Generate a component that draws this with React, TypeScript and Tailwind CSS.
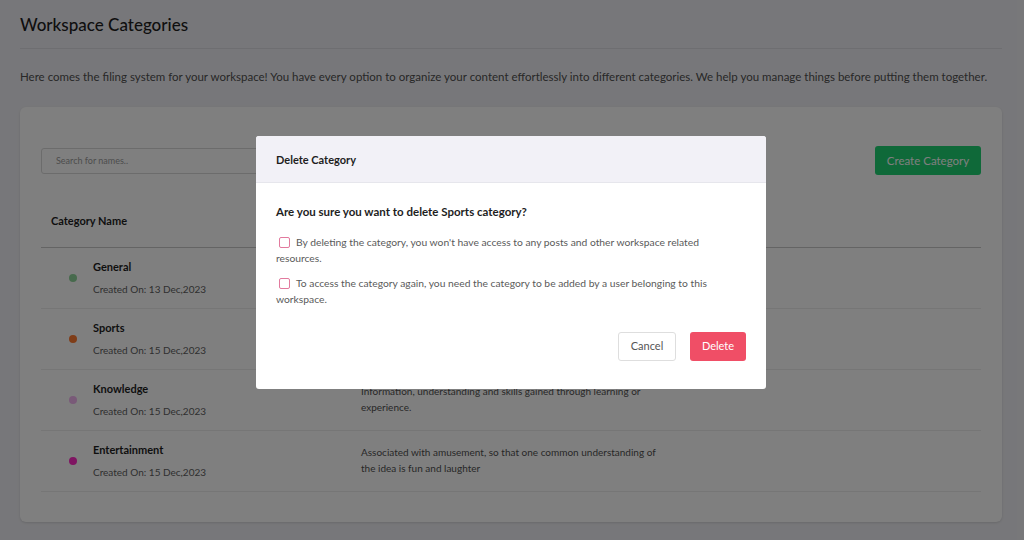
const categories = [
  {
    name: 'General',
    created: '13 Dec,2023',
    dot: 'bg-[#8fd49a]',
    description: 'Common to or affecting all people or things in a group, not limited to one particular area.',
  },
  {
    name: 'Sports',
    created: '15 Dec,2023',
    dot: 'bg-[#ff7a30]',
    description: 'Activities involving physical exertion and skill in which a team competes against another.',
  },
  {
    name: 'Knowledge',
    created: '15 Dec,2023',
    dot: 'bg-[#f2b4f0]',
    description: 'Information, understanding and skills gained through learning or experience.',
  },
  {
    name: 'Entertainment',
    created: '15 Dec,2023',
    dot: 'bg-[#ff2ac4]',
    description: 'Associated with amusement, so that one common understanding of the idea is fun and laughter',
  },
];

function Checkline({ children }: { children: React.ReactNode }) {
  return (
    <p className="text-[10.3px] leading-[15.5px] text-[#5a5a5a]">
      <span className="ml-[3px] mr-[6px] inline-block h-[11px] w-[11px] rounded-[2px] border border-[#e27a9e] align-[-2px]" />
      {children}
    </p>
  );
}

export default function App() {
  return (
    <div className="relative h-[540px] w-[1024px] overflow-hidden bg-[#efeff4] font-['Lato',sans-serif]">
      <div className="pl-5 pr-[22px]">
        <h1 className="pb-[13px] pt-[15px] text-[17px] font-medium leading-5 text-[#1e1e1e]">Workspace Categories</h1>
        <div className="h-px bg-[#dcdce2]" />
        <p className="mt-[20px] whitespace-nowrap text-[11.5px] leading-[15px] text-[#505050]">
          Here comes the filing system for your workspace! You have every option to organize your content effortlessly
          into different categories. We help you manage things before putting them together.
        </p>

        <div className="mt-[23px] h-[415px] rounded-md bg-white px-[21px] pt-[39px] shadow-sm">
          <div className="flex items-center justify-between">
            <input
              placeholder="Search for names.."
              className="h-[26px] w-[300px] rounded-[3px] border border-[#d8d8d8] px-[14px] text-[9px] text-[#333] outline-none placeholder:text-[#9a9a9a]"
            />
            <button className="h-[29px] w-[106px] rounded-[3px] bg-[#1ed272] text-[11.5px] text-white">
              Create Category
            </button>
          </div>

          <div className="mt-[21px] flex h-[52px] items-center border-b border-[#c8c8c8] pl-[10px]">
            <span className="text-[11px] font-bold text-[#1e1e1e]">Category Name</span>
          </div>

          {categories.map((c) => (
            <div key={c.name} className="flex h-[61px] border-b border-[#ececec]">
              <div className="flex w-[320px] items-center pl-[28px]">
                <span className={`h-2 w-2 rounded-full ${c.dot}`} />
                <div className="ml-4">
                  <div className="text-[11px] font-bold leading-[14px] text-[#1e1e1e]">{c.name}</div>
                  <div className="mt-2 text-[10px] leading-[14px] text-[#606060]">Created On: {c.created}</div>
                </div>
              </div>
              <p className="w-[310px] pt-[13px] text-[10px] leading-4 text-[#505050]">{c.description}</p>
            </div>
          ))}
        </div>
      </div>

      <div className="absolute inset-0 bg-black/50" />

      <div className="absolute inset-0 flex justify-center pr-[2px] pt-[136px]">
        <div className="h-fit w-[510px] overflow-hidden rounded-[3px] bg-white">
          <div className="flex h-[47px] items-center border-b border-[#e6e6ec] bg-[#f2f1f7] px-5">
            <span className="pt-[3px] text-[11px] font-bold text-[#1e1e1e]">Delete Category</span>
          </div>
          <div className="px-5 pb-[28px] pt-[22px]">
            <p className="text-[11.5px] font-bold leading-[14px] text-[#1e1e1e]">
              Are you sure you want to delete Sports category?
            </p>
            <div className="mt-[16px] flex flex-col gap-[10px]">
              <Checkline>
                By deleting the category, you won't have access to any posts and other workspace related resources.
              </Checkline>
              <Checkline>
                To access the category again, you need the category to be added by a user belonging to this workspace.
              </Checkline>
            </div>
            <div className="mt-[25px] flex justify-end gap-[14px]">
              <button className="h-[29px] w-[58px] rounded-[3px] border border-[#dedede] bg-white text-[11px] text-[#555]">
                Cancel
              </button>
              <button className="h-[29px] w-[56px] rounded-[3px] bg-[#f04e66] text-[11px] text-white">Delete</button>
            </div>
          </div>
        </div>
      </div>
    </div>
  );
}
